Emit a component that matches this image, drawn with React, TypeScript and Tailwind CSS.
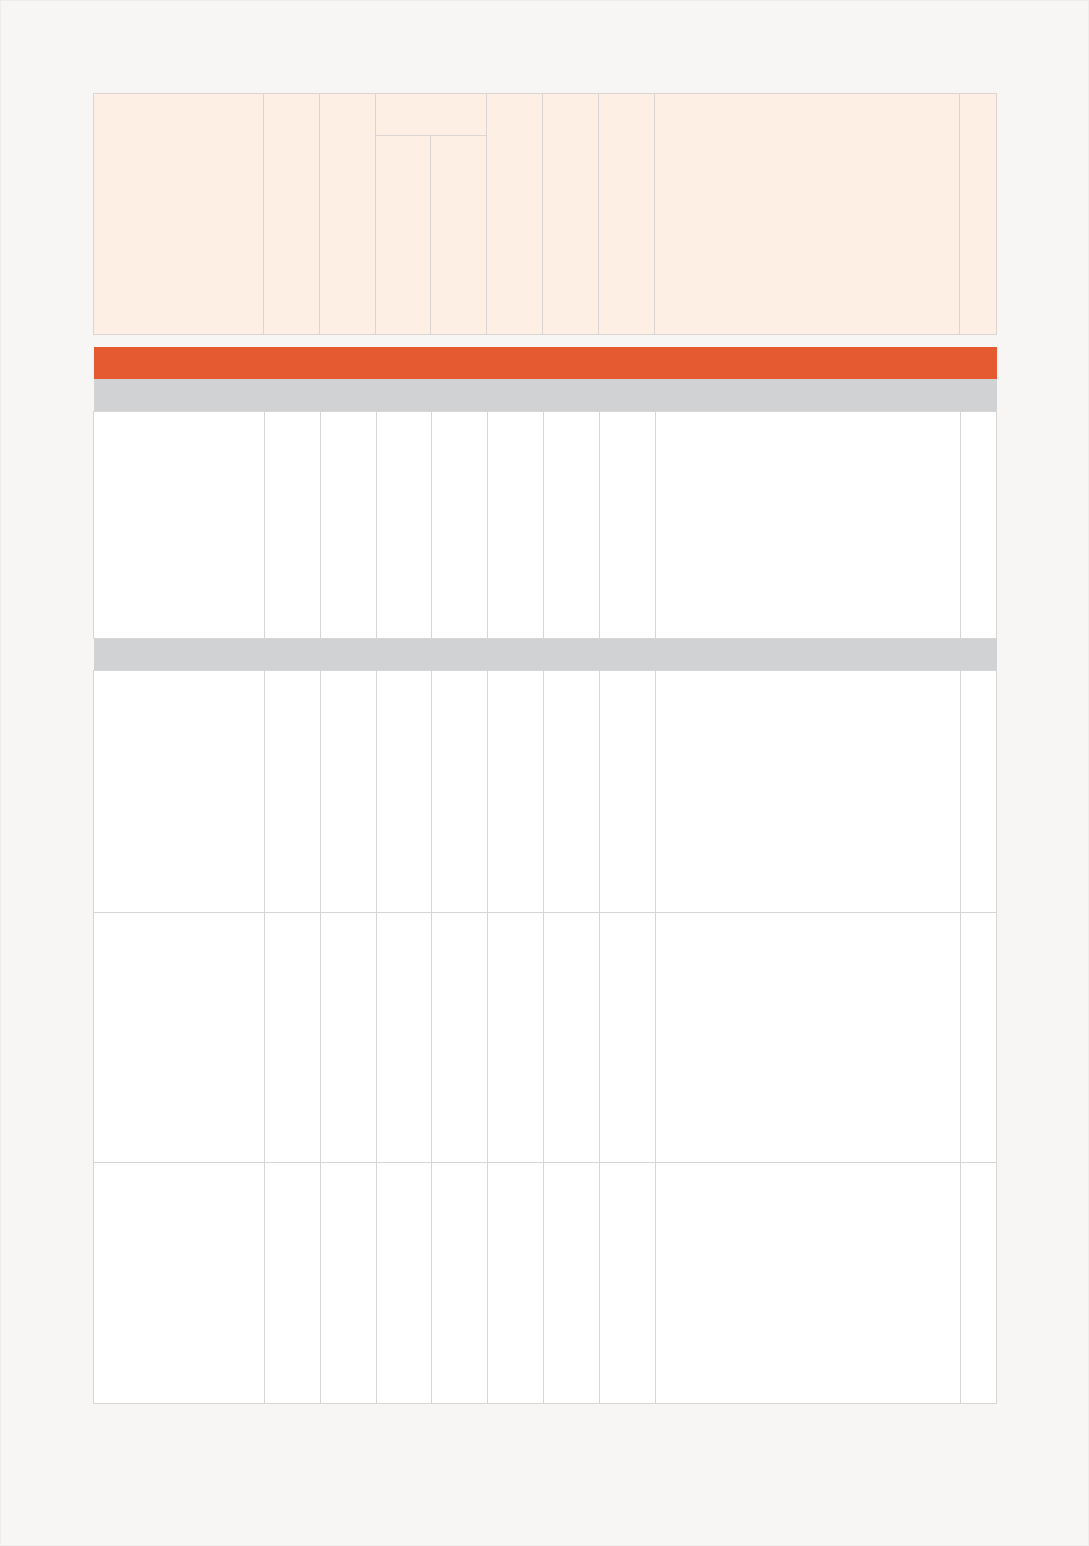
const headCols = [170, 56, 56, 55, 56, 56, 56, 56, 305, 37];
const bodyCols = [171, 56, 56, 55, 56, 56, 56, 56, 305, 36];

type Section = { rows: number[] };

const sections: Section[] = [{ rows: [227] }, { rows: [242, 250, 241] }];

const BodyRow = ({ height }: { height: number }) => (
  <tr style={{ height }}>
    {bodyCols.map((_, i) => (
      <td key={i} className="border border-[#d6d6d6] bg-white p-0" />
    ))}
  </tr>
);

export default function App() {
  return (
    <div className="min-h-[1546px] w-full bg-[#f8f6f4] border border-[#efedeb] pt-[92px] pl-[92px] font-['Liberation_Sans',sans-serif]">
      <div className="w-[903px] flex flex-col gap-[12px]">
        <table className="w-[903px] table-fixed border-collapse bg-[#fdefe3]">
          <colgroup>
            {headCols.map((w, i) => (
              <col key={i} style={{ width: w }} />
            ))}
          </colgroup>
          <thead>
            <tr className="h-[42px]">
              <th rowSpan={2} className="border border-[#dcd5d3] p-0" />
              <th rowSpan={2} className="border border-[#dcd5d3] p-0" />
              <th rowSpan={2} className="border border-[#dcd5d3] p-0" />
              <th colSpan={2} className="border border-[#dcd5d3] p-0" />
              <th rowSpan={2} className="border border-[#dcd5d3] p-0" />
              <th rowSpan={2} className="border border-[#dcd5d3] p-0" />
              <th rowSpan={2} className="border border-[#dcd5d3] p-0" />
              <th rowSpan={2} className="border border-[#dcd5d3] p-0" />
              <th rowSpan={2} className="border border-[#dcd5d3] p-0" />
            </tr>
            <tr className="h-[199px]">
              <th className="border border-[#dcd5d3] p-0" />
              <th className="border border-[#dcd5d3] p-0" />
            </tr>
          </thead>
        </table>

        <table className="w-[903px] table-fixed border-collapse">
          <colgroup>
            {bodyCols.map((w, i) => (
              <col key={i} style={{ width: w }} />
            ))}
          </colgroup>
          <tbody>
            <tr className="h-[32px]">
              <td colSpan={10} className="bg-[#e55a30] p-0" />
            </tr>
            {sections.map((s, si) => (
              <>
                <tr key={`g${si}`} className="h-[32px]">
                  <td colSpan={10} className="bg-[#d1d2d4] p-0" />
                </tr>
                {s.rows.map((h, ri) => (
                  <BodyRow key={`r${si}-${ri}`} height={h} />
                ))}
              </>
            ))}
          </tbody>
        </table>
      </div>
    </div>
  );
}
